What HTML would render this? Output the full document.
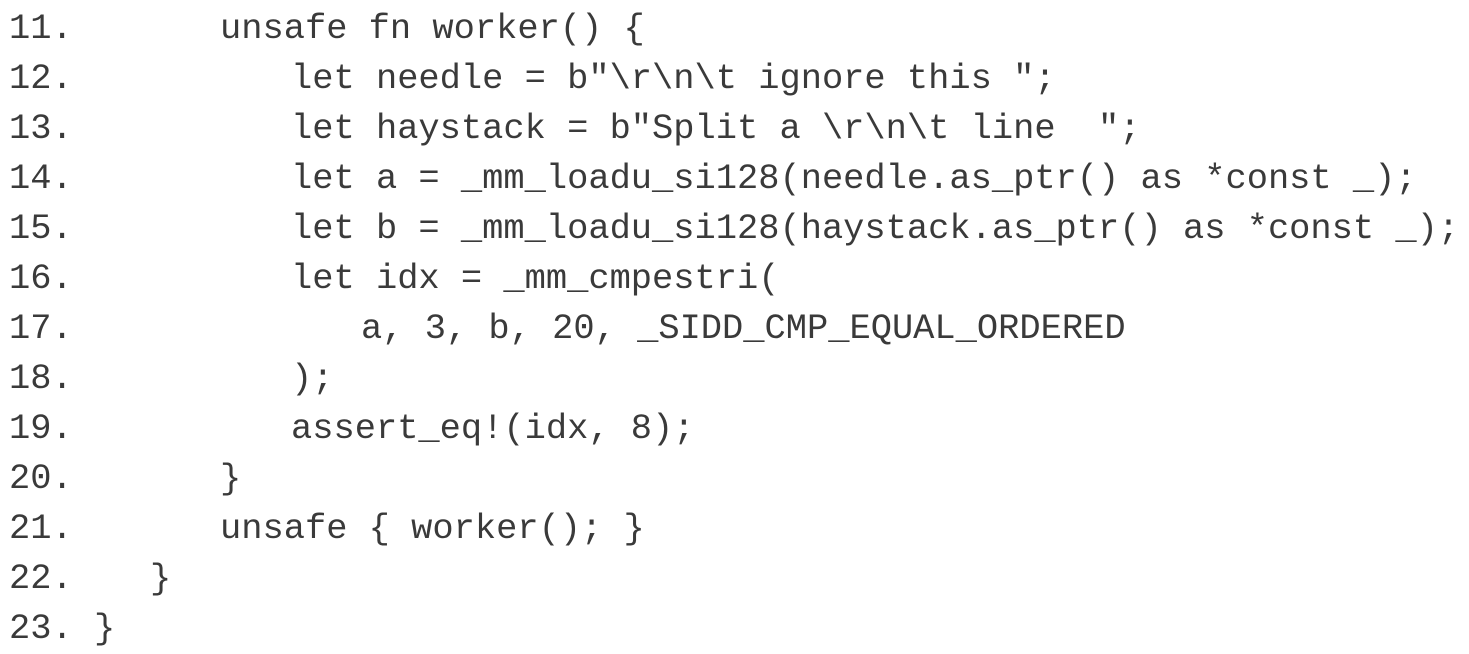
<!DOCTYPE html>
<html><head><meta charset="utf-8"><style>
html,body{margin:0;padding:0;background:#fff;width:1469px;height:651px;overflow:hidden}
.l{position:absolute;left:0;height:50px;line-height:50px;font-family:"Liberation Mono","Courier New",monospace;font-size:35.4px;color:#3a3a3a;white-space:pre}
.n{position:absolute;left:9px}
.c{position:absolute}
</style></head><body>
<div class="l" style="top:4px"><span class="n">11.</span><span class="c" style="left:220px">unsafe fn worker() {</span></div>
<div class="l" style="top:54px"><span class="n">12.</span><span class="c" style="left:291px">let needle = b"\r\n\t ignore this ";</span></div>
<div class="l" style="top:104px"><span class="n">13.</span><span class="c" style="left:291px">let haystack = b"Split a \r\n\t line  ";</span></div>
<div class="l" style="top:154px"><span class="n">14.</span><span class="c" style="left:291px">let a = _mm_loadu_si128(needle.as_ptr() as *const _);</span></div>
<div class="l" style="top:204px"><span class="n">15.</span><span class="c" style="left:291px">let b = _mm_loadu_si128(haystack.as_ptr() as *const _);</span></div>
<div class="l" style="top:254px"><span class="n">16.</span><span class="c" style="left:291px">let idx = _mm_cmpestri(</span></div>
<div class="l" style="top:304px"><span class="n">17.</span><span class="c" style="left:361px">a, 3, b, 20, _SIDD_CMP_EQUAL_ORDERED</span></div>
<div class="l" style="top:354px"><span class="n">18.</span><span class="c" style="left:291px">);</span></div>
<div class="l" style="top:404px"><span class="n">19.</span><span class="c" style="left:291px">assert_eq!(idx, 8);</span></div>
<div class="l" style="top:454px"><span class="n">20.</span><span class="c" style="left:220px">}</span></div>
<div class="l" style="top:504px"><span class="n">21.</span><span class="c" style="left:220px">unsafe { worker(); }</span></div>
<div class="l" style="top:554px"><span class="n">22.</span><span class="c" style="left:150px">}</span></div>
<div class="l" style="top:604px"><span class="n">23.</span><span class="c" style="left:94px">}</span></div>
</body></html>
